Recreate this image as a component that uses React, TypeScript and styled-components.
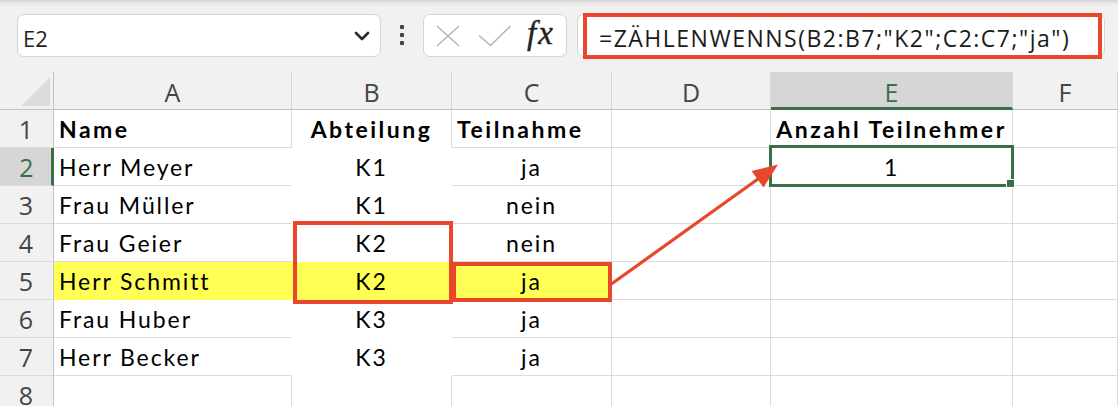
import React from 'react';
import styled, { createGlobalStyle, css } from 'styled-components';

const GlobalStyle = createGlobalStyle`
  html, body { margin: 0; padding: 0; background: #f1f1f1; }
  body { width: 1118px; height: 406px; overflow: hidden; }
  *, *::before, *::after { box-sizing: border-box; }
`;

const GREEN = '#3a6e48';
const RED = '#e8472b';
const YELLOW = '#ffff56';
const GRID = '#dcdcdc';
const UI_FONT = '"Open Sans", "Noto Sans", sans-serif';
const CELL_FONT = 'Lato, "Open Sans", sans-serif';

const Page = styled.div`
  position: relative;
  width: 1118px;
  height: 406px;
  overflow: hidden;
  background: #f1f1f1;
`;

const Toolbar = styled.div`
  height: 72px;
  display: flex;
  align-items: flex-start;
  padding: 14px 0 0 17px;
  background: linear-gradient(#d2d2d2 0px, #e8e8e8 3px, #f1f1f1 6px);
`;

const RoundBox = styled.div`
  height: 43px;
  background: #fff;
  border: 1px solid #d4d4d4;
  border-radius: 7px;
  display: flex;
  align-items: center;
`;

const NameBox = styled(RoundBox)`
  width: 364px;
  justify-content: space-between;
  padding: 4px 10px 0 5px;
  font-family: ${UI_FONT};
  font-size: 22px;
  color: #1f1f1f;
`;

const Chevron = styled.svg`
  margin-top: -4px;
`;

const Dots = styled.div`
  width: 42px;
  height: 43px;
  display: flex;
  flex-direction: column;
  align-items: center;
  justify-content: center;
  gap: 4px;
  padding-bottom: 1px;
`;

const Dot = styled.span`
  width: 4px;
  height: 4px;
  background: #444;
  border-radius: 1px;
`;

const EditButtons = styled(RoundBox)`
  width: 144px;
  padding: 0 0 0 12px;
  gap: 18px;
`;

const Fx = styled.span`
  font-family: "Liberation Serif", "DejaVu Serif", serif;
  font-style: italic;
  font-size: 33px;
  color: #222;
  margin-left: -3px;
  margin-top: -5px;
  letter-spacing: 2px;
  -webkit-text-stroke: 0.4px #222;
`;

const FormulaBox = styled(RoundBox)`
  position: relative;
  width: 528px;
  margin-left: 10px;
  padding: 5px 0 0 21px;
  font-family: ${UI_FONT};
  font-size: 23px;
  letter-spacing: 1.5px;
  color: #1a1a1a;
  white-space: nowrap;
`;

const RedFrame = styled.div`
  position: absolute;
  left: 5px;
  right: 2px;
  top: -2px;
  bottom: -3px;
  border: 4px solid ${RED};
`;

const Grid = styled.div`
  display: grid;
  grid-template-columns: 54px 238px 160px 160px 159px 242px 105px;
  grid-auto-rows: 38px;
`;

const Corner = styled.div`
  position: relative;
  background: #f1f1f1;
  border-right: 1px solid #c4c4c4;
  border-bottom: 1px solid #c4c4c4;
`;

const CornerTriangle = styled.div`
  position: absolute;
  left: 21px;
  top: 5px;
  width: 29px;
  height: 29px;
  background: #dcdcdc;
  clip-path: polygon(100% 0, 100% 100%, 0 100%);
`;

const ColHead = styled.div<{ $sel?: boolean }>`
  display: flex;
  align-items: center;
  justify-content: center;
  padding-top: 2px;
  font-family: ${UI_FONT};
  font-size: 25px;
  color: #444;
  background: #f1f1f1;
  border-right: 1px solid #d8d8d8;
  border-bottom: 1px solid #bdbdbd;
  ${(p) =>
    p.$sel &&
    css`
      background: #d6d6d6;
      color: ${GREEN};
      border-bottom: 3px solid ${GREEN};
      padding-top: 4px;
    `}
`;

const RowHead = styled.div<{ $sel?: boolean }>`
  display: flex;
  align-items: center;
  justify-content: center;
  padding-right: 1px;
  font-family: ${UI_FONT};
  font-size: 25px;
  color: #444;
  background: #f1f1f1;
  border-right: 1px solid #c4c4c4;
  border-bottom: 1px solid #dadada;
  ${(p) =>
    p.$sel &&
    css`
      background: #d6d6d6;
      color: ${GREEN};
      border-right: 3px solid ${GREEN};
      padding-right: 0;
      padding-left: 2px;
    `}
`;

const Cell = styled.div<{
  $align?: 'left' | 'center';
  $bold?: boolean;
  $noRight?: boolean;
  $noBottom?: boolean;
  $fill?: string;
}>`
  position: relative;
  display: flex;
  align-items: center;
  justify-content: ${(p) => (p.$align === 'center' ? 'center' : 'flex-start')};
  padding: 1px 0 0 ${(p) => (p.$align === 'center' ? '0' : '5px')};
  font-family: ${CELL_FONT};
  font-size: 23px;
  letter-spacing: ${(p) => (p.$bold ? '2.5px' : '1.9px')};
  font-weight: ${(p) => (p.$bold ? 700 : 400)};
  color: #000;
  white-space: nowrap;
  background: ${(p) => p.$fill || '#fff'};
  border-right: 1px solid ${(p) => (p.$noRight ? p.$fill || '#fff' : GRID)};
  border-bottom: 1px solid ${(p) => (p.$noBottom ? p.$fill || '#fff' : GRID)};
`;

const SelectionFrame = styled.div`
  position: absolute;
  left: -2px;
  top: -3px;
  right: -2px;
  bottom: -2px;
  border: 3px solid ${GREEN};
  z-index: 3;
  pointer-events: none;
`;

const FillHandle = styled.div`
  position: absolute;
  right: -4px;
  bottom: -4px;
  width: 9px;
  height: 9px;
  background: ${GREEN};
  border: 1px solid #fff;
`;

const Overlay = styled.div`
  position: absolute;
  inset: 0;
  z-index: 10;
  pointer-events: none;
`;

const RedBox = styled.div`
  position: absolute;
  border: 4px solid ${RED};
`;

const ArrowSvg = styled.svg`
  position: absolute;
  left: 0;
  top: 0;
`;

type CellData = {
  t?: string;
  b?: boolean;
  al?: 'left' | 'center';
};

const data: CellData[][] = [
  [{ t: 'Name', b: true }, { t: 'Abteilung', b: true, al: 'center' }, { t: 'Teilnahme', b: true }, {}, { t: 'Anzahl Teilnehmer', b: true, al: 'center' }, {}],
  [{ t: 'Herr Meyer' }, { t: 'K1', al: 'center' }, { t: 'ja', al: 'center' }, {}, { t: '1', al: 'center' }, {}],
  [{ t: 'Frau Müller' }, { t: 'K1', al: 'center' }, { t: 'nein', al: 'center' }, {}, {}, {}],
  [{ t: 'Frau Geier' }, { t: 'K2', al: 'center' }, { t: 'nein', al: 'center' }, {}, {}, {}],
  [{ t: 'Herr Schmitt' }, { t: 'K2', al: 'center' }, { t: 'ja', al: 'center' }, {}, {}, {}],
  [{ t: 'Frau Huber' }, { t: 'K3', al: 'center' }, { t: 'ja', al: 'center' }, {}, {}, {}],
  [{ t: 'Herr Becker' }, { t: 'K3', al: 'center' }, { t: 'ja', al: 'center' }, {}, {}, {}],
  [{}, {}, {}, {}, {}, {}],
];

const cols = ['A', 'B', 'C', 'D', 'E', 'F'];

export default function App() {
  return (
    <Page>
      <GlobalStyle />
      <Toolbar>
        <NameBox>
          <span>E2</span>
          <Chevron width="16" height="12" viewBox="0 0 16 12">
            <polyline points="2,3 8,9 14,3" fill="none" stroke="#2b2b2b" strokeWidth="2.6" strokeLinecap="round" strokeLinejoin="round" />
          </Chevron>
        </NameBox>
        <Dots>
          <Dot />
          <Dot />
          <Dot />
        </Dots>
        <EditButtons>
          <svg width="24" height="22" viewBox="0 0 24 22">
            <path d="M1 1 L23 21 M23 1 L1 21" stroke="#b4b4b4" strokeWidth="1.5" fill="none" />
          </svg>
          <svg width="34" height="22" viewBox="0 0 34 22">
            <path d="M1 10.5 L12.5 20.5 L32.5 1" stroke="#b4b4b4" strokeWidth="1.5" fill="none" />
          </svg>
          <Fx>fx</Fx>
        </EditButtons>
        <FormulaBox>
          =ZÄHLENWENNS(B2:B7;"K2";C2:C7;"ja")
          <RedFrame />
        </FormulaBox>
      </Toolbar>

      <Grid>
        <Corner>
          <CornerTriangle />
        </Corner>
        {cols.map((c) => (
          <ColHead key={c} $sel={c === 'E'}>
            {c}
          </ColHead>
        ))}
        {data.map((row, ri) => {
          const rowNum = ri + 1;
          return (
            <React.Fragment key={rowNum}>
              <RowHead $sel={rowNum === 2}>{rowNum}</RowHead>
              {row.map((cell, ci) => {
                const inBlock = rowNum >= 1 && rowNum <= 7;
                const noRight = (ci === 0 || ci === 1) && rowNum >= 2 && rowNum <= 7;
                const noBottom = ci === 1 && inBlock;
                const fill = rowNum === 5 && ci <= 2 ? YELLOW : undefined;
                const selected = rowNum === 2 && ci === 4;
                return (
                  <Cell
                    key={ci}
                    $align={cell.al}
                    $bold={cell.b}
                    $noRight={noRight || (!!fill && ci < 2)}
                    $noBottom={noBottom || !!fill}
                    $fill={fill}
                  >
                    {cell.t}
                    {selected && (
                      <SelectionFrame>
                        <FillHandle />
                      </SelectionFrame>
                    )}
                  </Cell>
                );
              })}
            </React.Fragment>
          );
        })}
      </Grid>

      <Overlay>
        <RedBox style={{ left: 293, top: 221, width: 160, height: 83 }} />
        <RedBox style={{ left: 452, top: 262, width: 160, height: 40 }} />
        <ArrowSvg width="1118" height="406" viewBox="0 0 1118 406">
          <line x1="610" y1="285" x2="758" y2="179" stroke={RED} strokeWidth="3.2" />
          <polygon points="778,164.5 751.5,171 763.5,187.5" fill={RED} />
        </ArrowSvg>
      </Overlay>
    </Page>
  );
}
